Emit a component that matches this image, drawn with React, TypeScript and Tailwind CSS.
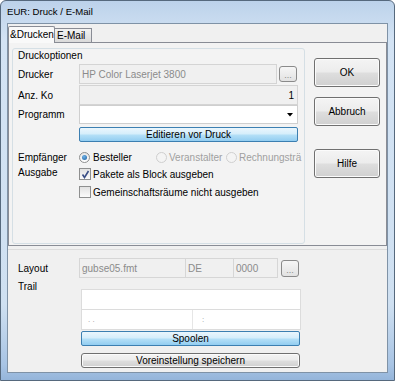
import React from "react";

const font = { fontFamily: '"Liberation Sans", Arial, sans-serif' };

function GrayBtn({ className = "", children }: { className?: string; children?: React.ReactNode }) {
  return (
    <div
      className={`flex items-center justify-center border border-[#707070] rounded-[3px] bg-[linear-gradient(#f4f4f4_0%,#ececec_48%,#dedede_52%,#d0d0d0_100%)] shadow-[inset_0_0_0_1px_#fbfbfb] text-black ${className}`}
    >
      {children}
    </div>
  );
}

function BlueBtn({ className = "", children }: { className?: string; children?: React.ReactNode }) {
  return (
    <div
      className={`flex items-center justify-center border border-[#3c7fb1] rounded-[2px] bg-[linear-gradient(#eaf6fd_0%,#d6eefb_45%,#b3dff7_55%,#92cdf1_100%)] text-black leading-none ${className}`}
    >
      {children}
    </div>
  );
}

function DotsBtn({ className = "" }: { className?: string }) {
  return (
    <div
      className={`flex items-end justify-center border border-[#8a8a8a] rounded-[3px] bg-[linear-gradient(#f6f6f6,#e2e2e2)] text-[#8a8a8a] text-[9px] leading-[11px] ${className}`}
    >
      ...
    </div>
  );
}

function Radio({ checked, disabled }: { checked?: boolean; disabled?: boolean }) {
  return (
    <div
      className={`w-[11px] h-[11px] rounded-full border flex items-center justify-center shrink-0 ${
        disabled ? "border-[#cfcfcf] bg-[#f4f4f4]" : "border-[#8e8f8f] bg-[linear-gradient(#e6e6e6,#ffffff)]"
      }`}
    >
      {checked && <div className="w-[5px] h-[5px] rounded-full bg-[radial-gradient(circle_at_40%_35%,#6fb3e8,#1b5d9e)]" />}
    </div>
  );
}

function Check({ checked }: { checked?: boolean }) {
  return (
    <div className="w-[12px] h-[12px] border border-[#8e8f8f] bg-[linear-gradient(#e2e2e2,#fbfbfb)] flex items-center justify-center shrink-0">
      {checked && (
        <svg width="9" height="9" viewBox="0 0 9 9">
          <path d="M1.5 4.5 L3.5 7.5 L7.5 1" fill="none" stroke="#3b4f86" strokeWidth="1.6" />
        </svg>
      )}
    </div>
  );
}

export default function App() {
  return (
    <div
      style={font}
      className="w-[395px] h-[381px] flex flex-col border border-[#56697d] rounded-t-[6px] bg-[linear-gradient(#bcd2ea_0%,#d3e3f4_10%,#cfe0f1_80%,#a8c4e4_96%,#95b5da_100%)] text-[10px] text-black overflow-hidden"
    >
      {/* title bar */}
      <div className="h-[22px] pl-[6px] flex items-center text-[9.6px] text-black">EUR: Druck / E-Mail</div>

      <div className="flex-1 px-[6px] pb-[7px] flex">
        <div className="w-[381px] h-[350px] border border-[#7f92a6] bg-[#f0f0f0] flex flex-col">
          {/* tab strip */}
          <div className="h-[18px] flex items-end">
            <div className="relative z-10 -mb-[1px] h-[17px] w-[47px] border border-b-0 border-[#898c95] bg-[#f9f9f9] flex items-center pl-[1px] leading-none rounded-t-[2px]">
              &amp;Drucken
            </div>
            <div className="h-[14px] w-[37px] border border-l-0 border-b-0 border-[#898c95] bg-[linear-gradient(#f2f2f2,#dadada)] flex items-center pl-[2px] leading-none">
              E-Mail
            </div>
          </div>

          {/* tab panel */}
          <div className="h-[204px] border border-[#898c95] bg-[#f3f3f3] flex pl-[3px] pt-[5px]">
            {/* group */}
            <div className="w-[293px] h-[196px] border border-[#d5dfe5] rounded-[3px] flex flex-col">
              <div className="h-[12px] mt-[1px] pl-[5px] leading-[12px]">Druckoptionen</div>

              <div className="mt-[2px] h-[20px] flex items-center">
                <div className="w-[66px] pl-[5px]">Drucker</div>
                <div className="w-[198px] h-[20px] border border-[#d4d4d4] bg-[#f0f0f0] flex items-center pl-[2px] text-[#8b8b8b]">
                  HP Color Laserjet 3800
                </div>
                <DotsBtn className="ml-[2px] w-[18px] h-[16px]" />
              </div>

              <div className="mt-[1px] h-[20px] flex items-center">
                <div className="w-[66px] pl-[5px]">Anz. Ko</div>
                <div className="w-[219px] h-[20px] border border-[#d4d4d4] bg-[#f0f0f0] flex items-center justify-end pr-[3px]">
                  1
                </div>
              </div>

              <div className="h-[19px] flex items-center">
                <div className="w-[66px] pl-[5px]">Programm</div>
                <div className="w-[219px] h-[19px] border border-[#cfcfcf] bg-white flex items-center justify-end pr-[4px]">
                  <svg width="6" height="4" viewBox="0 0 6 4">
                    <path d="M0 0 H6 L3 3.5 Z" fill="#000" />
                  </svg>
                </div>
              </div>

              <div className="mt-[3px] flex">
                <div className="w-[66px]" />
                <BlueBtn className="w-[219px] h-[15px]">Editieren vor Druck</BlueBtn>
              </div>

              <div className="mt-[8px] h-[14px] flex items-center">
                <div className="w-[66px] pl-[5px]">Empfänger</div>
                <div className="w-[77px] flex items-center gap-[3px]">
                  <Radio checked />
                  <span>Besteller</span>
                </div>
                <div className="w-[70px] flex items-center gap-[2px] text-[#a0a0a0]">
                  <Radio disabled />
                  <span>Veranstalter</span>
                </div>
                <div className="flex-1 overflow-hidden whitespace-nowrap flex items-center gap-[2px] text-[#a0a0a0]">
                  <Radio disabled />
                  <span>Rechnungsträ</span>
                </div>
              </div>

              <div className="mt-[3px] h-[14px] flex items-center">
                <div className="w-[66px] pl-[5px] -mt-[4px]">Ausgabe</div>
                <div className="flex items-center gap-[2px]">
                  <Check checked />
                  <span>Pakete als Block ausgeben</span>
                </div>
              </div>

              <div className="mt-[4px] h-[14px] flex items-center">
                <div className="w-[66px]" />
                <div className="flex items-center gap-[2px]">
                  <Check />
                  <span>Gemeinschaftsräume nicht ausgeben</span>
                </div>
              </div>
            </div>

            {/* side buttons */}
            <div className="ml-[9px] flex flex-col">
              <GrayBtn className="mt-[10px] w-[66px] h-[29px]">OK</GrayBtn>
              <GrayBtn className="mt-[10px] w-[66px] h-[29px]">Abbruch</GrayBtn>
              <GrayBtn className="mt-[23px] w-[66px] h-[29px]">Hilfe</GrayBtn>
            </div>
          </div>

          {/* bottom area */}
          <div className="flex-1 flex flex-col">
            <div className="mt-[3px] border-t border-[#dcdcdc] h-[1px] bg-white" />
            <div className="mt-[8px] h-[20px] flex items-center">
              <div className="w-[71px] pl-[10px]">Layout</div>
              <div className="w-[107px] h-[20px] border border-[#d6d6d6] bg-[#f0f0f0] flex items-center pl-[2px] text-[#8b8b8b]">
                gubse05.fmt
              </div>
              <div className="w-[48px] h-[20px] border border-l-0 border-[#d6d6d6] bg-[#f0f0f0] flex items-center pl-[2px] text-[#8b8b8b]">
                DE
              </div>
              <div className="w-[44px] h-[20px] border border-l-0 border-[#d6d6d6] bg-[#f0f0f0] flex items-center pl-[2px] text-[#8b8b8b]">
                0000
              </div>
              <DotsBtn className="ml-[3px] w-[18px] h-[17px]" />
            </div>

            <div className="flex">
              <div className="w-[73px] pl-[10px] pt-[3px] leading-[12px]">Trail</div>
              <div className="w-[220px] pt-[11px] flex flex-col">
                <div className="h-[21px] border border-[#dcdcdc] bg-white" />
                <div className="h-[20px] flex border border-t-0 border-[#dcdcdc] bg-white text-[#9a9a9a] text-[8px]">
                  <div className="w-[111px] border-r border-[#e6e6e6] pl-[6px] flex items-center">. .</div>
                  <div className="pl-[9px] flex items-center">:</div>
                </div>
                <BlueBtn className="mt-[1px] w-[219px] h-[15px]">Spoolen</BlueBtn>
                <GrayBtn className="mt-[7px] w-[219px] h-[15px] rounded-[2px] leading-none">Voreinstellung speichern</GrayBtn>
              </div>
            </div>
          </div>
        </div>
      </div>
    </div>
  );
}
